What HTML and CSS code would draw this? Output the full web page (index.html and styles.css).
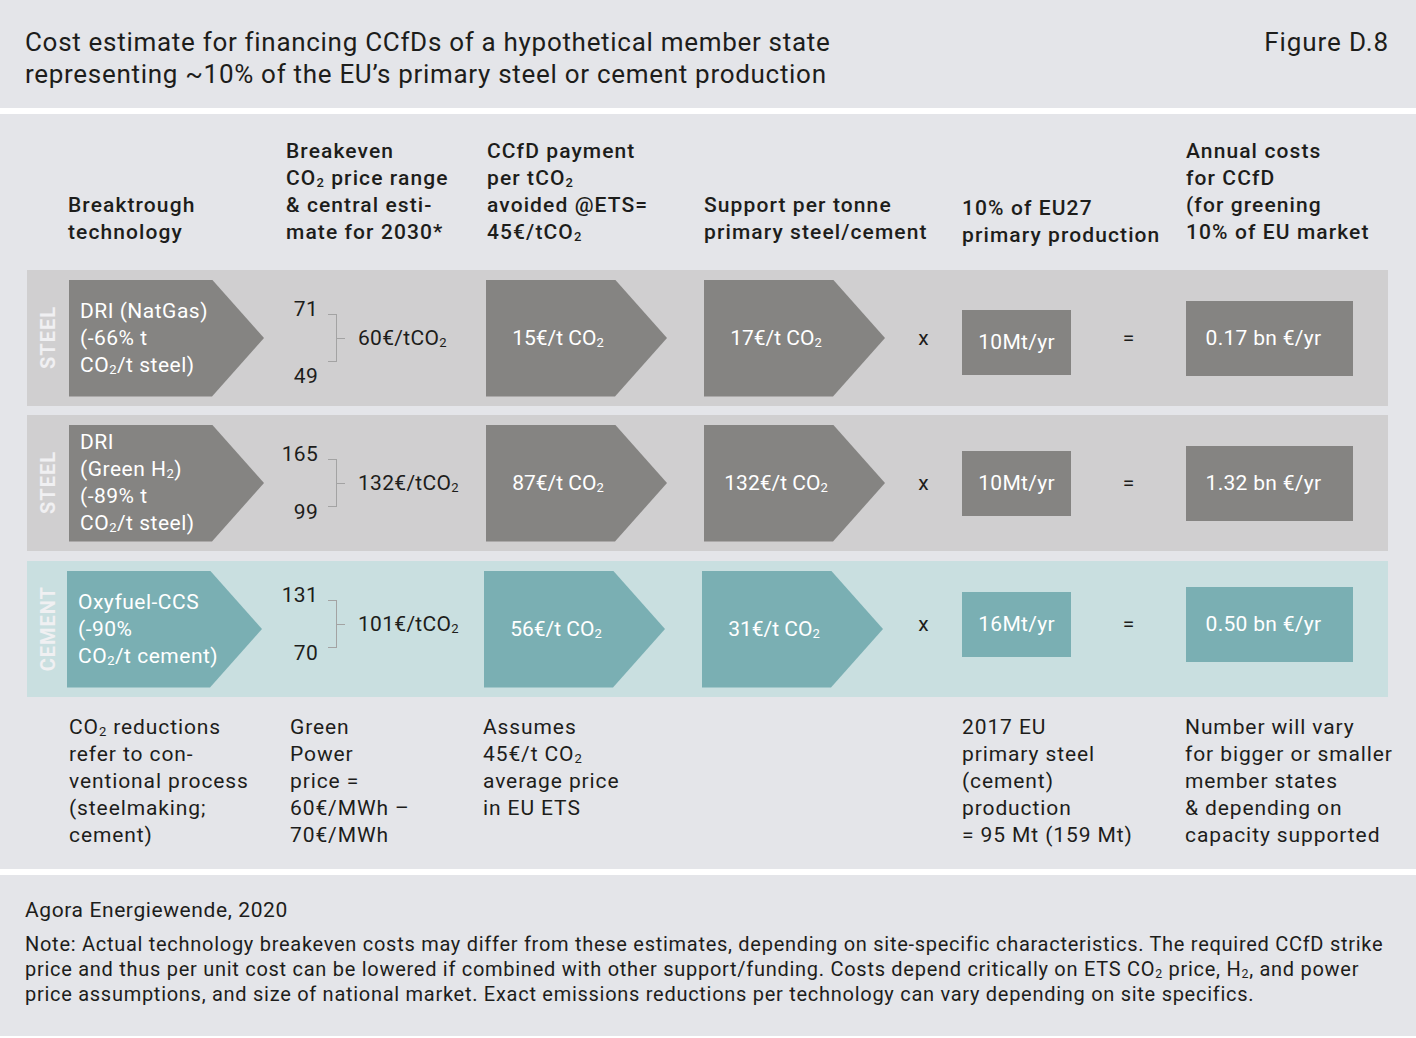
FILE: index.html
```html
<!DOCTYPE html>
<html lang="en">
<head>
<meta charset="utf-8">
<title>Figure D.8</title>
<link rel="stylesheet" href="styles.css">
</head>
<body>
<div class="page">
  <header class="top">
    <h1 class="title">Cost estimate for financing CCfDs of a hypothetical member state<br>representing ~10% of the EU’s primary steel or cement production</h1>
    <div class="fig">Figure D.8</div>
  </header>

  <main class="panel">
    <div class="heads">
      <div class="h">Breaktrough<br>technology</div>
      <div class="h">Breakeven<br>CO<sub>2</sub> price range<br>&amp; central esti-<br>mate for 2030*</div>
      <div class="h">CCfD payment<br>per tCO<sub>2</sub><br>avoided @ETS=<br>45€/tCO<sub>2</sub></div>
      <div class="h">Support per tonne<br>primary steel/cement</div>
      <div class="h h-prod">10% of EU27<br>primary production</div>
      <div class="h">Annual costs<br>for CCfD<br>(for greening<br>10% of EU market</div>
    </div>

    <div class="row r1">
      <div class="sector"><span>STEEL</span></div>
      <div class="arrow tech"><div>DRI (NatGas)<br>(-66% t<br>CO<sub>2</sub>/t steel)</div></div>
      <div class="range range-tall">
        <div class="nums"><span>71</span><span>49</span></div>
        <div class="brace"></div>
        <div class="central">60€/tCO<sub>2</sub></div>
      </div>
      <div class="arrow val"><span>15€/t CO<sub>2</sub></span></div>
      <div class="arrow val"><span>17€/t CO<sub>2</sub></span></div>
      <div class="op">x</div>
      <div class="box mt">10Mt/yr</div>
      <div class="op">=</div>
      <div class="box cost">0.17 bn €/yr</div>
    </div>

    <div class="row r2">
      <div class="sector"><span>STEEL</span></div>
      <div class="arrow tech"><div>DRI<br>(Green H<sub>2</sub>)<br>(-89% t<br>CO<sub>2</sub>/t steel)</div></div>
      <div class="range">
        <div class="nums"><span>165</span><span>99</span></div>
        <div class="brace"></div>
        <div class="central">132€/tCO<sub>2</sub></div>
      </div>
      <div class="arrow val"><span>87€/t CO<sub>2</sub></span></div>
      <div class="arrow val"><span>132€/t CO<sub>2</sub></span></div>
      <div class="op">x</div>
      <div class="box mt">10Mt/yr</div>
      <div class="op">=</div>
      <div class="box cost">1.32 bn €/yr</div>
    </div>

    <div class="row row-teal r3">
      <div class="sector"><span>CEMENT</span></div>
      <div class="arrow tech"><div>Oxyfuel-CCS<br>(-90%<br>CO<sub>2</sub>/t cement)</div></div>
      <div class="range">
        <div class="nums"><span>131</span><span>70</span></div>
        <div class="brace"></div>
        <div class="central">101€/tCO<sub>2</sub></div>
      </div>
      <div class="arrow val"><span>56€/t CO<sub>2</sub></span></div>
      <div class="arrow val"><span>31€/t CO<sub>2</sub></span></div>
      <div class="op">x</div>
      <div class="box mt">16Mt/yr</div>
      <div class="op">=</div>
      <div class="box cost">0.50 bn €/yr</div>
    </div>

    <div class="notes">
      <div>CO<sub>2</sub> reductions<br>refer to con-<br>ventional process<br>(steelmaking;<br>cement)</div>
      <div>Green<br>Power<br>price =<br>60€/MWh –<br>70€/MWh</div>
      <div>Assumes<br>45€/t CO<sub>2</sub><br>average price<br>in EU ETS</div>
      <div>2017 EU<br>primary steel<br>(cement)<br>production<br>= 95 Mt (159 Mt)</div>
      <div>Number will vary<br>for bigger or smaller<br>member states<br>&amp; depending on<br>capacity supported</div>
    </div>
  </main>

  <footer class="foot">
    <p class="src">Agora Energiewende, 2020</p>
    <p class="note">Note: Actual technology breakeven costs may differ from these estimates, depending on site-specific characteristics. The required CCfD strike<br>price and thus per unit cost can be lowered if combined with other support/funding. Costs depend critically on ETS CO<sub>2</sub> price, H<sub>2</sub>, and power<br>price assumptions, and size of national market. Exact emissions reductions per technology can vary depending on site specifics.</p>
  </footer>
</div>
</body>
</html>
```

FILE: styles.css
```css
* { box-sizing: border-box; }

body {
  margin: 0;
  background: #ffffff;
  font-family: Roboto, "Liberation Sans", sans-serif;
  color: #1d1d1b;
}

.page { width: 1416px; }

sub {
  font-size: 0.62em;
  vertical-align: -0.18em;
  line-height: 0;
}

/* ---------- header ---------- */
.top {
  height: 108px;
  background: #e4e5e9;
  display: flex;
  justify-content: space-between;
  padding: 26px 27px 0 25px;
}

.title {
  margin: 0;
  font-weight: 400;
  font-size: 26px;
  line-height: 32px;
  letter-spacing: 0.7px;
}

.fig {
  font-size: 26px;
  line-height: 32px;
  letter-spacing: 0.9px;
}

/* ---------- main panel ---------- */
.panel {
  margin-top: 6px;
  height: 755px;
  background: #e4e5e9;
}

.heads {
  display: grid;
  grid-template-columns: 218px 201px 217px 258px 224px 1fr;
  padding-left: 68px;
  height: 156px;
  align-items: end;
  font-size: 21px;
  line-height: 27px;
  font-weight: 500;
  letter-spacing: 1.1px;
}

.h { padding-bottom: 24px; }
.h-prod { padding-bottom: 21px; }

.row {
  display: grid;
  grid-template-columns: 42px 217px 200px 218px 181px 77px 109px 115px 202px;
  align-items: center;
  width: 1361px;
  height: 136px;
  margin-left: 27px;
  background: #d0cfd0;
}

.r2 { margin-top: 9px; }
.r3 { margin-top: 10px; }
.row-teal { background: #c9dfe0; }

.sector {
  display: flex;
  justify-content: center;
  align-items: center;
}

.sector span {
  writing-mode: vertical-rl;
  transform: rotate(180deg);
  color: #f0f0f2;
  font-size: 20px;
  font-weight: 700;
  letter-spacing: 1px;
}

.arrow {
  height: 117px;
  background: #858482;
  color: #ffffff;
  clip-path: polygon(0 0, calc(100% - 52px) 0, 100% 50%, calc(100% - 52px) 100%, 0 100%);
  display: flex;
  align-items: center;
  font-size: 21px;
  line-height: 27px;
}

.row-teal .arrow,
.row-teal .box { background: #7aafb3; }
.row-teal .arrow { margin-left: -2px; }

.tech {
  width: 195px;
  padding-left: 11px;
  letter-spacing: 0.5px;
}

.val {
  width: 181px;
  padding-right: 37px;
  justify-content: center;
  white-space: nowrap;
}

.range {
  display: flex;
  align-items: center;
  font-size: 21px;
  line-height: 27px;
  letter-spacing: 0.3px;
}

.nums {
  width: 32px;
  height: 85px;
  display: flex;
  flex-direction: column;
  justify-content: space-between;
  align-items: flex-end;
}

.range-tall .nums { height: 94px; }

.brace {
  position: relative;
  margin-left: 10px;
  width: 9px;
  height: 48px;
  border: 1px solid #a3a3a3;
  border-left: none;
}

.brace::after {
  content: "";
  position: absolute;
  left: 100%;
  top: 50%;
  width: 9px;
  border-top: 1px solid #a3a3a3;
}

.central {
  margin-left: 21px;
  white-space: nowrap;
}

.op {
  text-align: center;
  font-size: 21px;
}

.box {
  background: #858482;
  color: #ffffff;
  display: flex;
  align-items: center;
  justify-content: center;
  font-size: 21px;
  letter-spacing: 0.3px;
  white-space: nowrap;
}

.mt { width: 109px; height: 65px; }

.cost {
  width: 167px;
  height: 75px;
  padding-right: 12px;
}

/* per-row vertical nudges seen in the reference */
.r1 .nums { margin-top: 10px; }
.r1 .mt { margin-top: 8px; }
.r3 .range,
.r3 .box,
.r3 .op { margin-bottom: 10px; }

.notes {
  display: grid;
  grid-template-columns: 221px 193px 479px 223px 1fr;
  padding-left: 69px;
  margin-top: 17px;
  font-size: 21px;
  line-height: 27px;
  letter-spacing: 0.9px;
}

/* ---------- footer ---------- */
.foot {
  margin-top: 6px;
  height: 161px;
  background: #e4e5e9;
  padding: 23px 25px 0 25px;
}

.foot p { margin: 0; }

.foot .src {
  margin-bottom: 9px;
  font-size: 21px;
  line-height: 25px;
  letter-spacing: 0.6px;
}

.foot .note {
  font-size: 20px;
  line-height: 25px;
  letter-spacing: 0.72px;
  white-space: nowrap;
}
```
